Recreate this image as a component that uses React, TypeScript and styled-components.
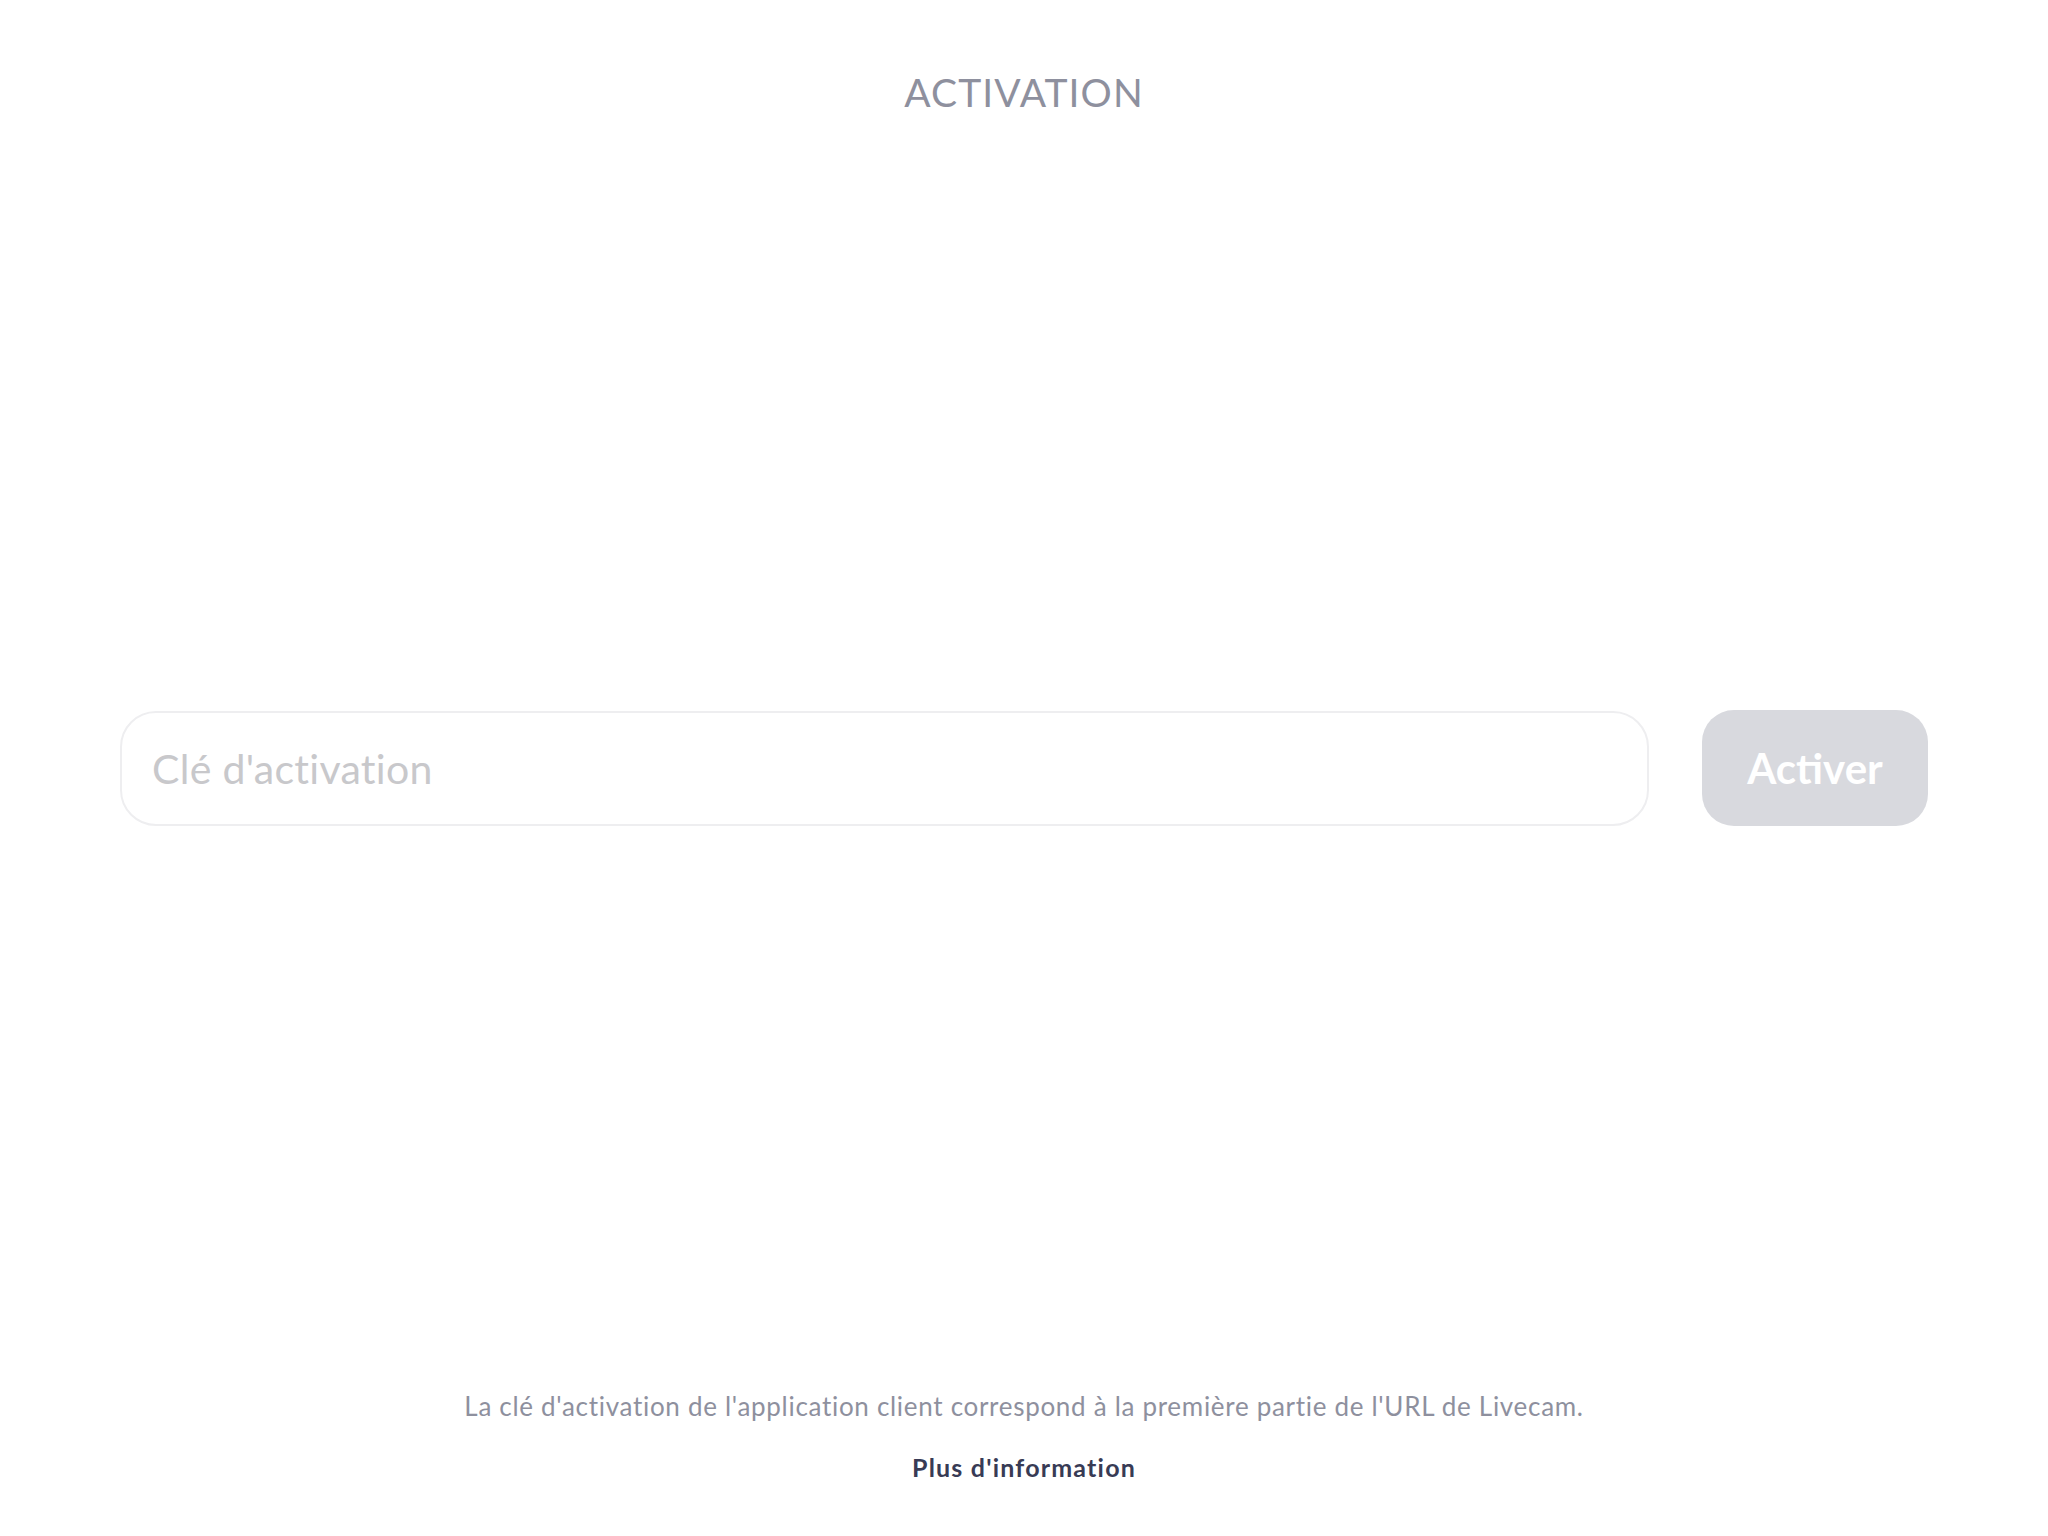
import React, { useState } from 'react'
import styled, { createGlobalStyle } from 'styled-components'

const GlobalStyle = createGlobalStyle`
  html, body {
    margin: 0;
    padding: 0;
    background: #fff;
  }
  body {
    font-family: Lato, "Noto Sans", sans-serif;
  }
`

const App = (): React.ReactElement => {
  const [key, setKey] = useState('')

  return (
    <Page>
      <GlobalStyle />
      <Header>
        <Title>ACTIVATION</Title>
      </Header>
      <Main>
        <Form onSubmit={(e) => e.preventDefault()}>
          <KeyInput
            value={key}
            onChange={(e) => setKey(e.target.value)}
            placeholder="Clé d'activation"
          />
          <SubmitButton type="submit" disabled={!key}>
            Activer
          </SubmitButton>
        </Form>
      </Main>
      <Footer>
        <Hint>
          La clé d'activation de l'application client correspond à la première partie de l'URL de
          Livecam.
        </Hint>
        <MoreLink href="#">Plus d'information</MoreLink>
      </Footer>
    </Page>
  )
}

const Page = styled.div`
  min-height: 100vh;
  display: flex;
  flex-direction: column;
`
const Header = styled.header`
  height: 160px;
  box-sizing: border-box;
  padding-top: 69px;
  display: flex;
  justify-content: center;
`
const Title = styled.h1`
  margin: 0;
  font-size: 39px;
  font-weight: 400;
  line-height: 1.2;
  color: #8e909e;
  letter-spacing: 1.1px;
`
const Main = styled.main`
  flex: 1;
  display: flex;
  align-items: center;
  padding: 0 120px;
`
const Form = styled.form`
  flex: 1;
  display: flex;
  gap: 53px;
  align-items: center;
`
const KeyInput = styled.input`
  flex: 1;
  height: 115px;
  box-sizing: border-box;
  border: 2px solid #eeeef0;
  border-radius: 36px;
  padding: 0 30px;
  font-family: inherit;
  font-size: 41px;
  color: #343750;
  outline: none;
  background: #fff;
  letter-spacing: 0.3px;

  &::placeholder {
    color: #c8c8cb;
  }
`
const SubmitButton = styled.button`
  width: 226px;
  height: 116px;
  border: none;
  border-radius: 32px;
  background: #d8d9de;
  color: #fff;
  font-family: inherit;
  font-size: 42px;
  font-weight: 700;
  cursor: pointer;

  &:disabled {
    cursor: default;
  }
`
const Footer = styled.footer`
  height: 160px;
  box-sizing: border-box;
  padding-bottom: 54px;
  display: flex;
  flex-direction: column;
  justify-content: flex-end;
  align-items: center;
  gap: 30px;
`
const Hint = styled.p`
  margin: 0;
  font-size: 26px;
  line-height: 1.2;
  color: #8e909e;
  letter-spacing: 0.7px;
`
const MoreLink = styled.a`
  font-size: 25px;
  font-weight: 700;
  line-height: 1.2;
  color: #383b55;
  text-decoration: none;
  letter-spacing: 1.2px;
`

export default App
